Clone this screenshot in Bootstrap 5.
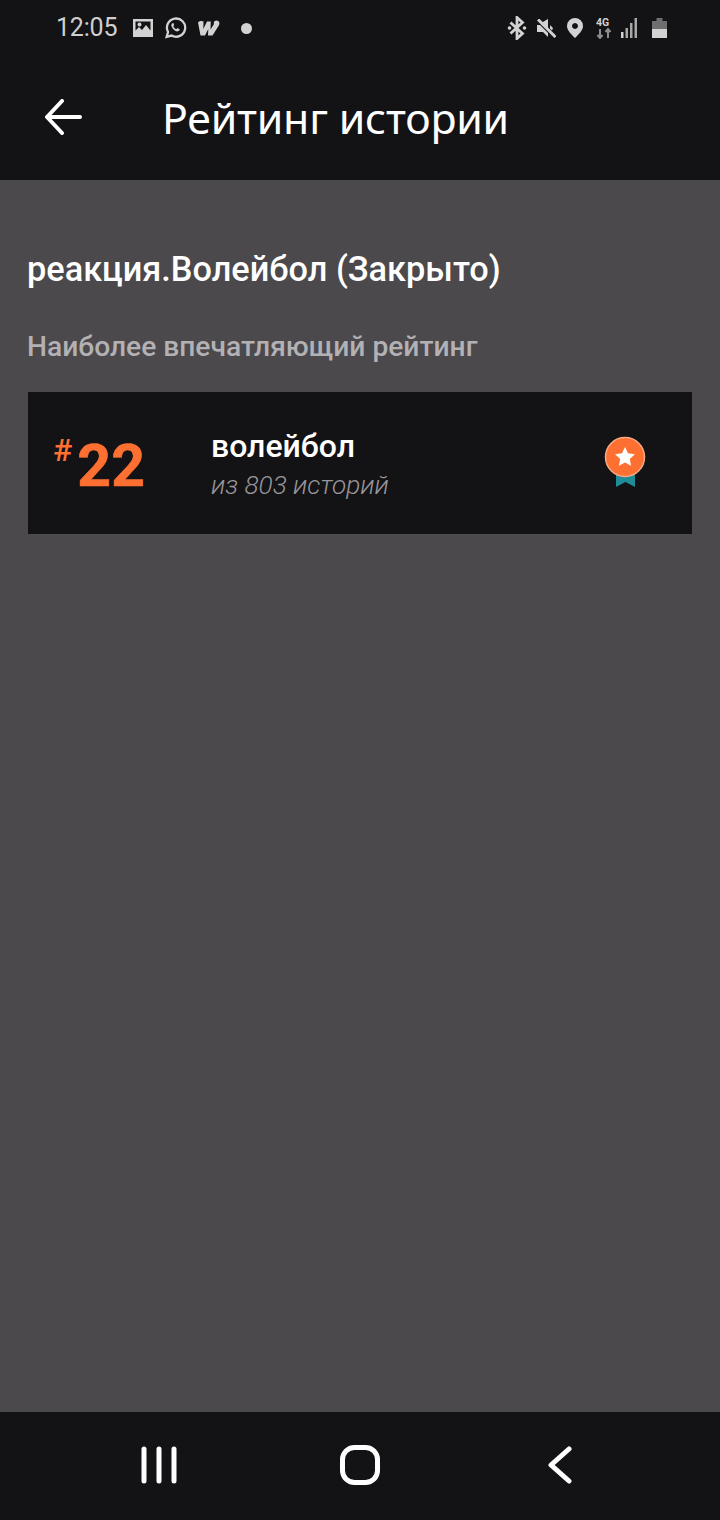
<!DOCTYPE html>
<html lang="en">
<head>
    <meta charset="UTF-8">
    <meta name="viewport" content="width=device-width, initial-scale=1.0">
    <title>Рейтинг истории</title>
    <link href="https://cdn.jsdelivr.net/npm/bootstrap@5.3.0/dist/css/bootstrap.min.css" rel="stylesheet">
    <style>
        body { background: #4b494c; font-family: Roboto, sans-serif; }
        .phone-screen { width: 720px; height: 1520px; }
        .dark-bar { background: #131215; }
        .status-line { height: 58px; padding: 0 53px 2px 56px; color: #cfcfcf; font-size: 25px; }
        .status-time { width: 77px; letter-spacing: -.2px; }
        .status-dot { width: 11px; height: 11px; margin-left: 21px; background: #d2d2d2; }
        .ic-wa { margin-left: 11px; }
        .ic-w { margin-left: 10px; }
        .ic-mute { margin-left: 10px; }
        .ic-pin { margin-left: 11px; }
        .ic-4g { margin-left: 13px; }
        .ic-signal { margin-left: 9px; }
        .ic-battery { margin-left: 15px; }
        .app-head { height: 122px; padding: 0 0 4px 44px; }
        .head-title { margin: 0 0 0 79px; color: #fff; font: 400 42.8px "Noto Sans", sans-serif; letter-spacing: -.2px; }
        .content-area { padding: 0 28px; }
        .story-name { margin: 66px 0 0 -1px; color: #fff; font-size: 34.3px; font-weight: 500; line-height: 46px; }
        .sub-head { margin: 38px 0 0 -1px; color: #b3b1b4; font-size: 28.2px; font-weight: 500; line-height: 34px; }
        .rank-card { height: 142px; margin-top: 28px; background: #131215; border-radius: 0; }
        .rank-num { width: 183px; padding-left: 25px; color: #fd7032; }
        .rank-hash { font-size: 32px; font-weight: 500; margin-top: -26px; margin-right: 5px; line-height: 1; }
        .rank-big { font-size: 59px; font-weight: 700; line-height: 1; margin-top: 4px; -webkit-text-stroke: .6px #fd7032; }
        .rank-text { padding-top: 5px; }
        .rank-title { color: #fff; font-size: 32px; font-weight: 500; line-height: 38px; }
        .rank-sub { margin-top: 1px; color: #98969a; font-size: 26.2px; font-weight: 300; font-style: italic; line-height: 38px; }
        .medal-icon { margin: 0 46px 3px 0; }
        .bottom-nav { height: 108px; padding-bottom: 2px; }
        .nav-recent { margin-left: 140px; }
        .nav-home { margin-left: 162px; }
        .nav-back { margin-left: 168px; }
    </style>
</head>
<body>
    <div class="phone-screen d-flex flex-column overflow-hidden">
        <div class="dark-bar status-line d-flex align-items-center">
            <span class="status-time">12:05</span>
            <svg width="20" height="18" viewBox="0 0 20 18"><path fill="#d2d2d2" fill-rule="evenodd" d="M0 0h20v18H0zM2.500 2.500v9l3.500-3.500 3 3 4-5 4.500 5.500v-9zM6.500 3.500a2 2 0 1 1-.01 0z"/></svg>
            <svg class="ic-wa" width="23" height="24" viewBox="0 0 26 26"><path fill="none" stroke="#d2d2d2" stroke-width="2.600" d="M3 23l1.600-5.500A10.300 10.300 0 1 1 8.500 21.500z"/><path fill="#d2d2d2" d="M9.500 7.500c-1.500 1-1.800 3 0 5.500s4 4 6 3.800c1.500-.2 2.300-1.300 2.200-2.400l-2.700-1.300-1.100 1.200c-1.400-.5-2.800-2-3.400-3.300l1-1.200-1-2.700z"/></svg>
            <svg class="ic-w" width="23" height="16" viewBox="0 0 23 16"><path fill="#d2d2d2" d="M1 2.500C2.500.8 5 .6 6.500 1.500L6.300 9 10 1.500h3.800L13.500 9.500 17 4c-.8-1.800.2-3.500 2.500-3.500 2.500 0 4 2.500 2 5.500L15.500 15.500h-4.500l.3-6.500-3.300 6.500H3.500z"/></svg>
            <span class="status-dot rounded-circle"></span>
            <div class="d-flex align-items-center ms-auto">
                <svg width="20" height="24" viewBox="0 0 20 24"><path fill="none" stroke="#d2d2d2" stroke-width="2.800" d="M3.500 6.500l12 11-5.500 5V1.500l5.500 5-12 11"/><circle cx="2.500" cy="12" r="1.800" fill="#d2d2d2"/><circle cx="17.500" cy="12" r="1.800" fill="#d2d2d2"/></svg>
                <svg class="ic-mute" width="19" height="19" viewBox="0 0 19 19"><path fill="#d2d2d2" d="M0 6h3l8 8v4L6 13H0zM5 3.500L11 0v9.500zM13 6l3 3-1 2.500-2-2z"/><path stroke="#d2d2d2" stroke-width="3" d="M1 .5l17.500 17.500"/></svg>
                <svg class="ic-pin" width="16" height="20" viewBox="0 0 16 20"><path fill="#d2d2d2" fill-rule="evenodd" d="M8 0a8 8 0 0 1 8 8c0 4.500-4.500 8.500-8 12-3.500-3.500-8-7.500-8-12a8 8 0 0 1 8-8zm0 5a3 3 0 1 0 .01 0z"/></svg>
                <svg class="ic-4g" width="16" height="22" viewBox="0 0 16 22"><text x="0" y="9" fill="#d2d2d2" font-size="10.500" font-weight="700" font-family="Roboto">4G</text><path stroke="#8c8c8c" stroke-width="2" fill="none" d="M4 12v9M1.500 18l2.500 3 2.500-3M12 21v-9M9.500 15l2.500-3 2.500 3"/></svg>
                <svg class="ic-signal" width="16" height="20" viewBox="0 0 16 20"><rect x="0" y="14" width="2.500" height="6" fill="#d2d2d2"/><rect x="4.500" y="10" width="2.500" height="10" fill="#a8a8a8"/><rect x="9" y="5" width="2.500" height="15" fill="#a8a8a8"/><rect x="13.500" y="0" width="2.500" height="20" fill="#a8a8a8"/></svg>
                <svg class="ic-battery" width="15" height="20" viewBox="0 0 15 20"><path fill="#6f6f70" d="M4.500 0h6v3H15v8H0V3h4.500z"/><rect y="11" width="15" height="9" fill="#d2d2d2"/></svg>
            </div>
        </div>

        <div class="dark-bar app-head d-flex align-items-center">
            <svg width="39" height="36" viewBox="0 0 39 36"><path fill="none" stroke="#fff" stroke-width="4" stroke-linecap="round" stroke-linejoin="round" d="M36 18H3M18 2L3 18l15 16"/></svg>
            <h1 class="head-title">Рейтинг истории</h1>
        </div>

        <div class="content-area flex-grow-1">
            <div class="story-name">реакция.Волейбол (Закрыто)</div>
            <div class="sub-head">Наиболее впечатляющий рейтинг</div>
            <div class="card rank-card border-0 flex-row align-items-center">
                <div class="rank-num d-flex align-items-center">
                    <span class="rank-hash">#</span>
                    <span class="rank-big">22</span>
                </div>
                <div class="rank-text flex-grow-1">
                    <div class="rank-title">волейбол</div>
                    <div class="rank-sub">из 803 историй</div>
                </div>
                <svg class="medal-icon" width="42" height="52" viewBox="0 0 42 52">
                    <path fill="#1f8c98" d="M12 30h19v21l-9.500-5-9.500 5z"/>
                    <circle cx="21" cy="21" r="19.500" fill="#fd7032" stroke="#f8a985" stroke-width="1.500"/>
                    <path fill="#fff" d="M21 11l3 6.300 6.900.9-5.100 4.700 1.300 6.800-6.100-3.300-6.100 3.300 1.300-6.800-5.100-4.700 6.900-.9z"/>
                </svg>
            </div>
        </div>

        <div class="dark-bar bottom-nav d-flex align-items-center">
            <svg class="nav-recent" width="38" height="38" viewBox="0 0 38 38"><path stroke="#fff" stroke-width="5" stroke-linecap="round" d="M4 3v32M19 3v32M34 3v32"/></svg>
            <svg class="nav-home" width="40" height="40" viewBox="0 0 40 40"><rect x="2.500" y="2.500" width="35" height="35" rx="12" fill="none" stroke="#fff" stroke-width="5"/></svg>
            <svg class="nav-back" width="24" height="38" viewBox="0 0 24 38"><path fill="none" stroke="#fff" stroke-width="5" stroke-linecap="round" stroke-linejoin="round" d="M21 3L3 19l18 16"/></svg>
        </div>
    </div>
    <script src="https://cdn.jsdelivr.net/npm/bootstrap@5.3.0/dist/js/bootstrap.bundle.min.js"></script>
</body>
</html>
